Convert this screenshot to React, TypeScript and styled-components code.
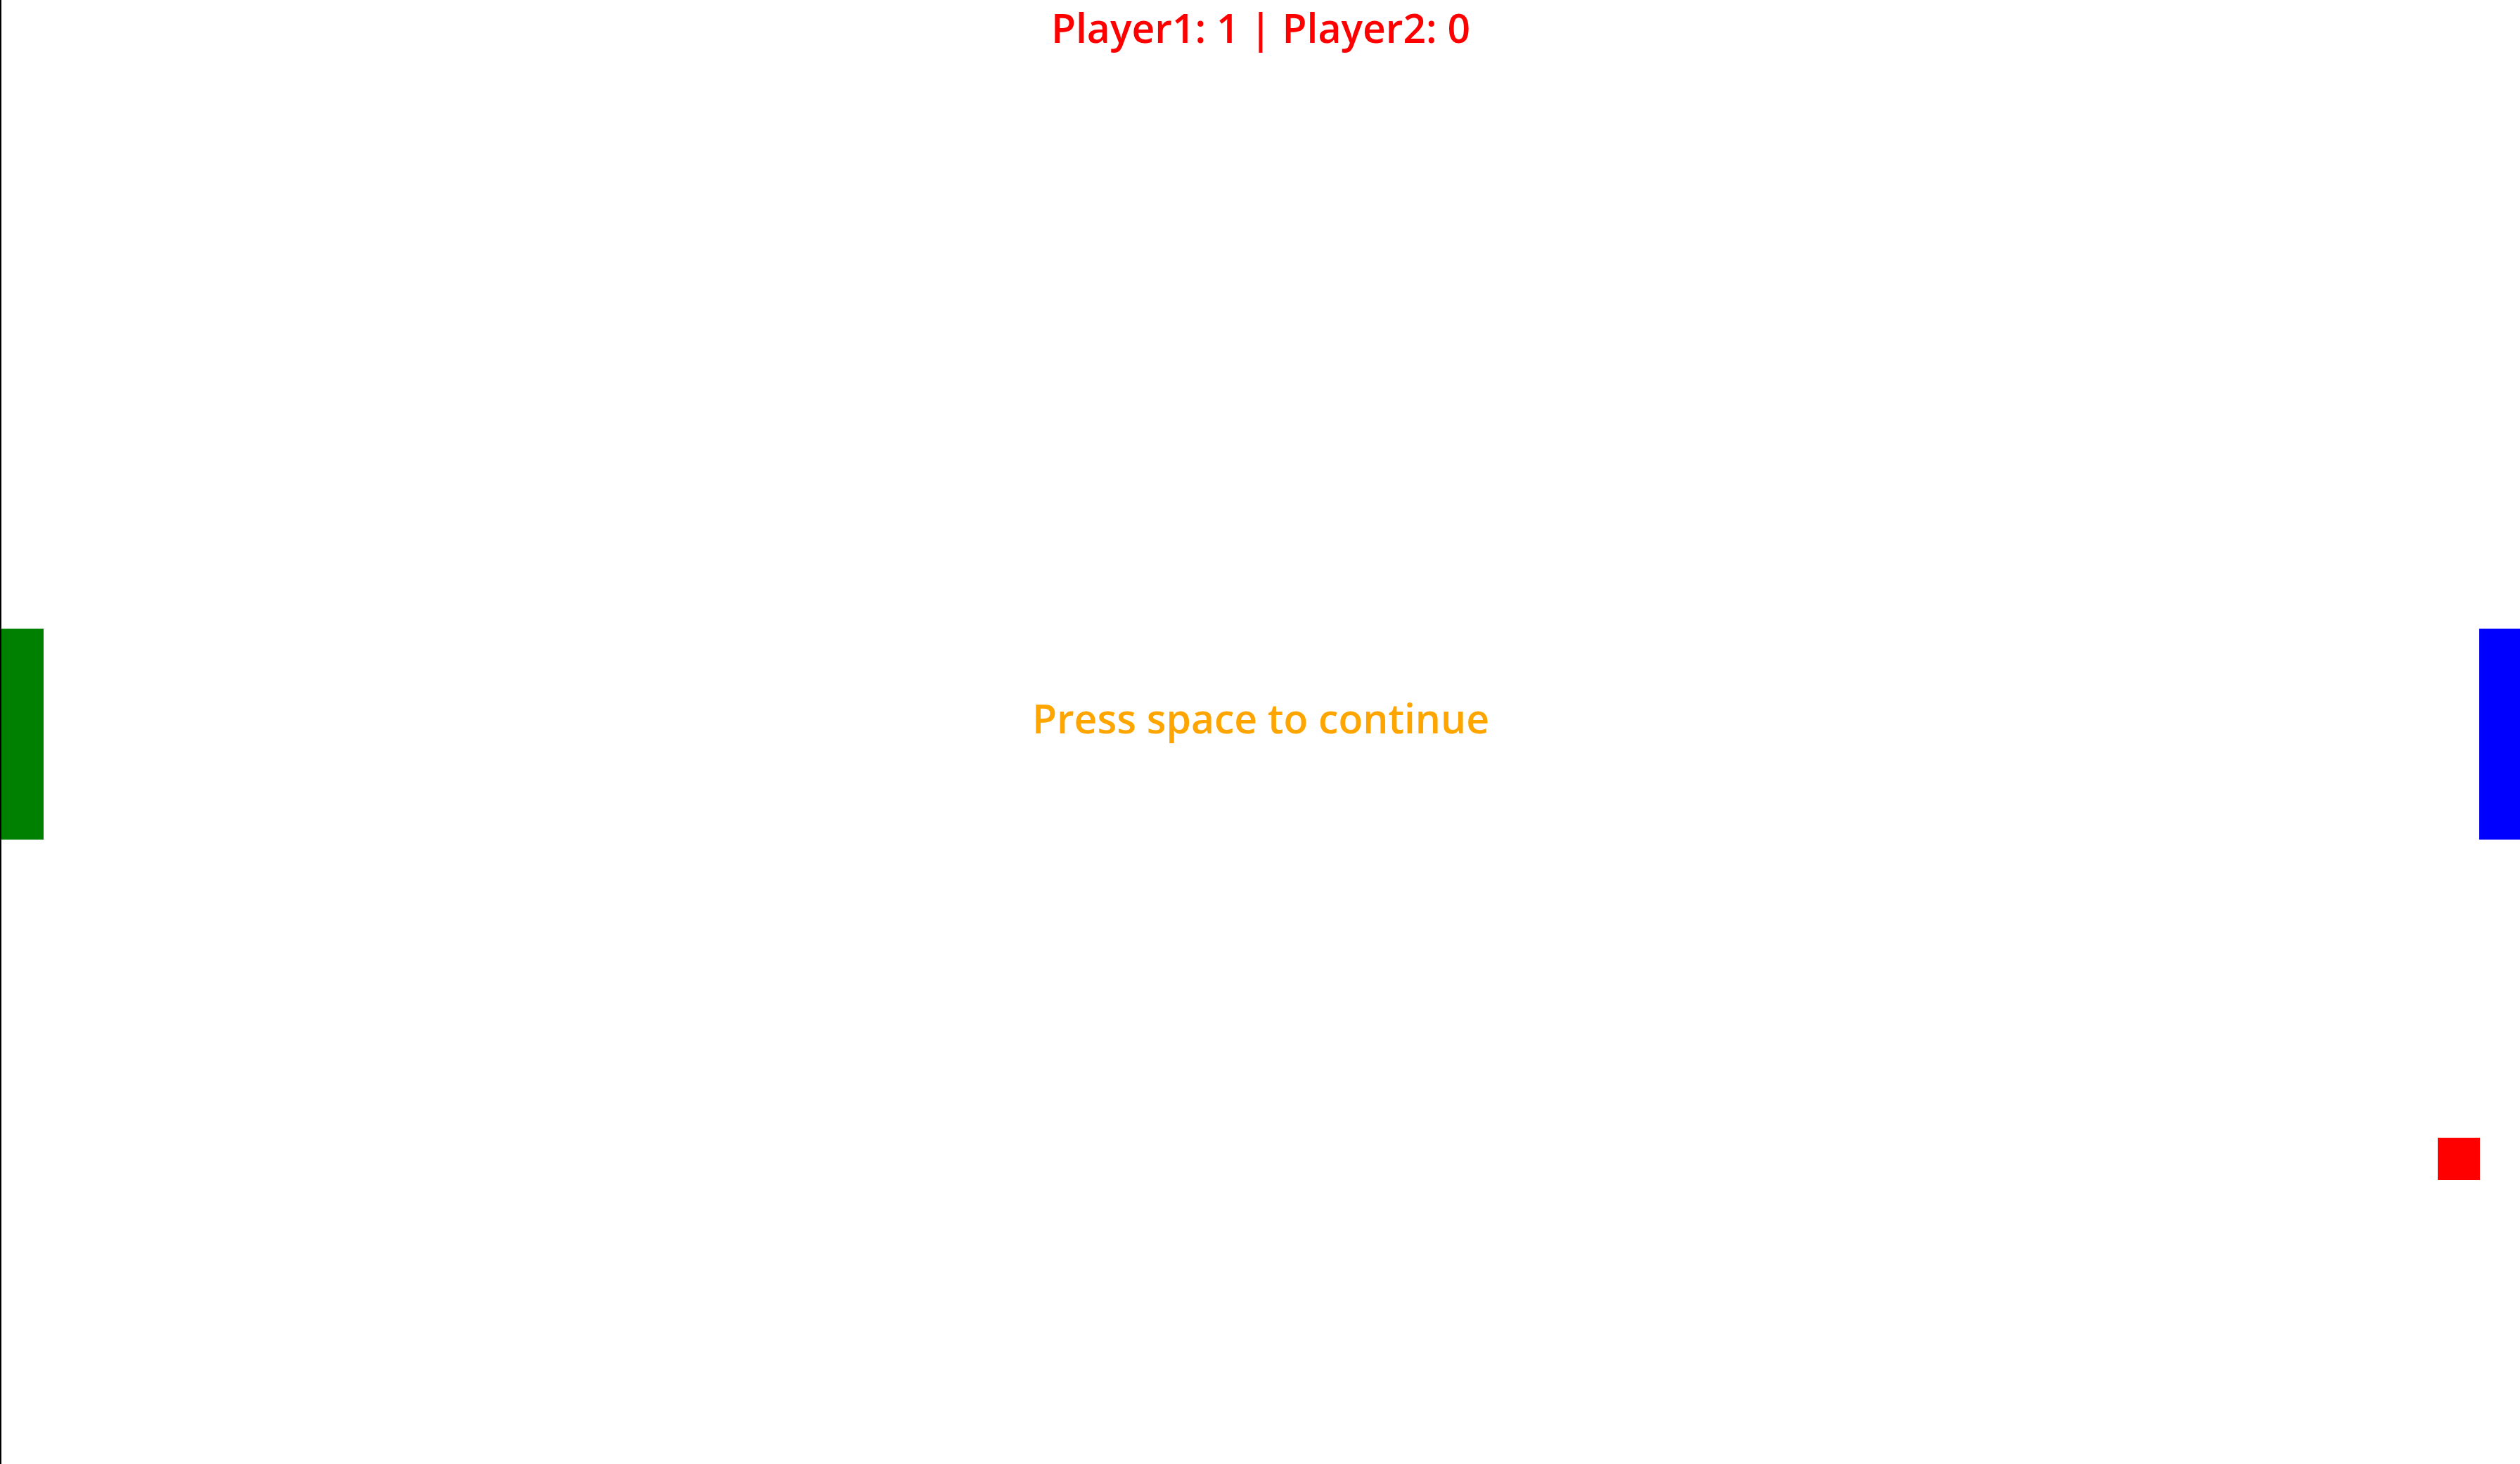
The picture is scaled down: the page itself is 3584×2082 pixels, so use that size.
import styled, { createGlobalStyle } from 'styled-components';

const GlobalStyle = createGlobalStyle`
html, body {
    margin: 0;
    padding: 0;
    background: #ffffff;
    overflow: hidden;
}
`

const Field = styled.main`
position: relative;
height: 2082px;
border-left: 2px solid #000000;
overflow: hidden;
font-family: 'Comic Sans MS', 'Open Sans', sans-serif;
font-weight: 600;
`

const Score = styled.h1`
margin: 0;
font-size: 57px;
line-height: normal;
font-weight: 600;
text-align: center;
color: #ff0000;
`

const Message = styled.p`
position: absolute;
left: 0;
right: 0;
top: 982px;
margin: 0;
font-size: 57px;
line-height: normal;
text-align: center;
color: #ffa500;
`

const Paddle = styled.div<{side:'left'|'right', color:string}>`
position: absolute;
top: 894px;
width: 60px;
height: 300px;
background: ${props=>props.color};
${props=>props.side === 'left' ? 'left: 0;' : 'right: -2px;'}
`

const Ball = styled.div`
position: absolute;
left: 3465px;
top: 1618px;
width: 60px;
height: 60px;
background: #ff0000;
`

export default function App(){
    const scores = { player1: 1, player2: 0 }
    return(
        <>
            <GlobalStyle />
            <Field>
                <Score>Player1: {scores.player1} | Player2: {scores.player2}</Score>
                <Paddle side="left" color="#008000" />
                <Paddle side="right" color="#0000ff" />
                <Ball />
                <Message>Press space to continue</Message>
            </Field>
        </>
    )
}
